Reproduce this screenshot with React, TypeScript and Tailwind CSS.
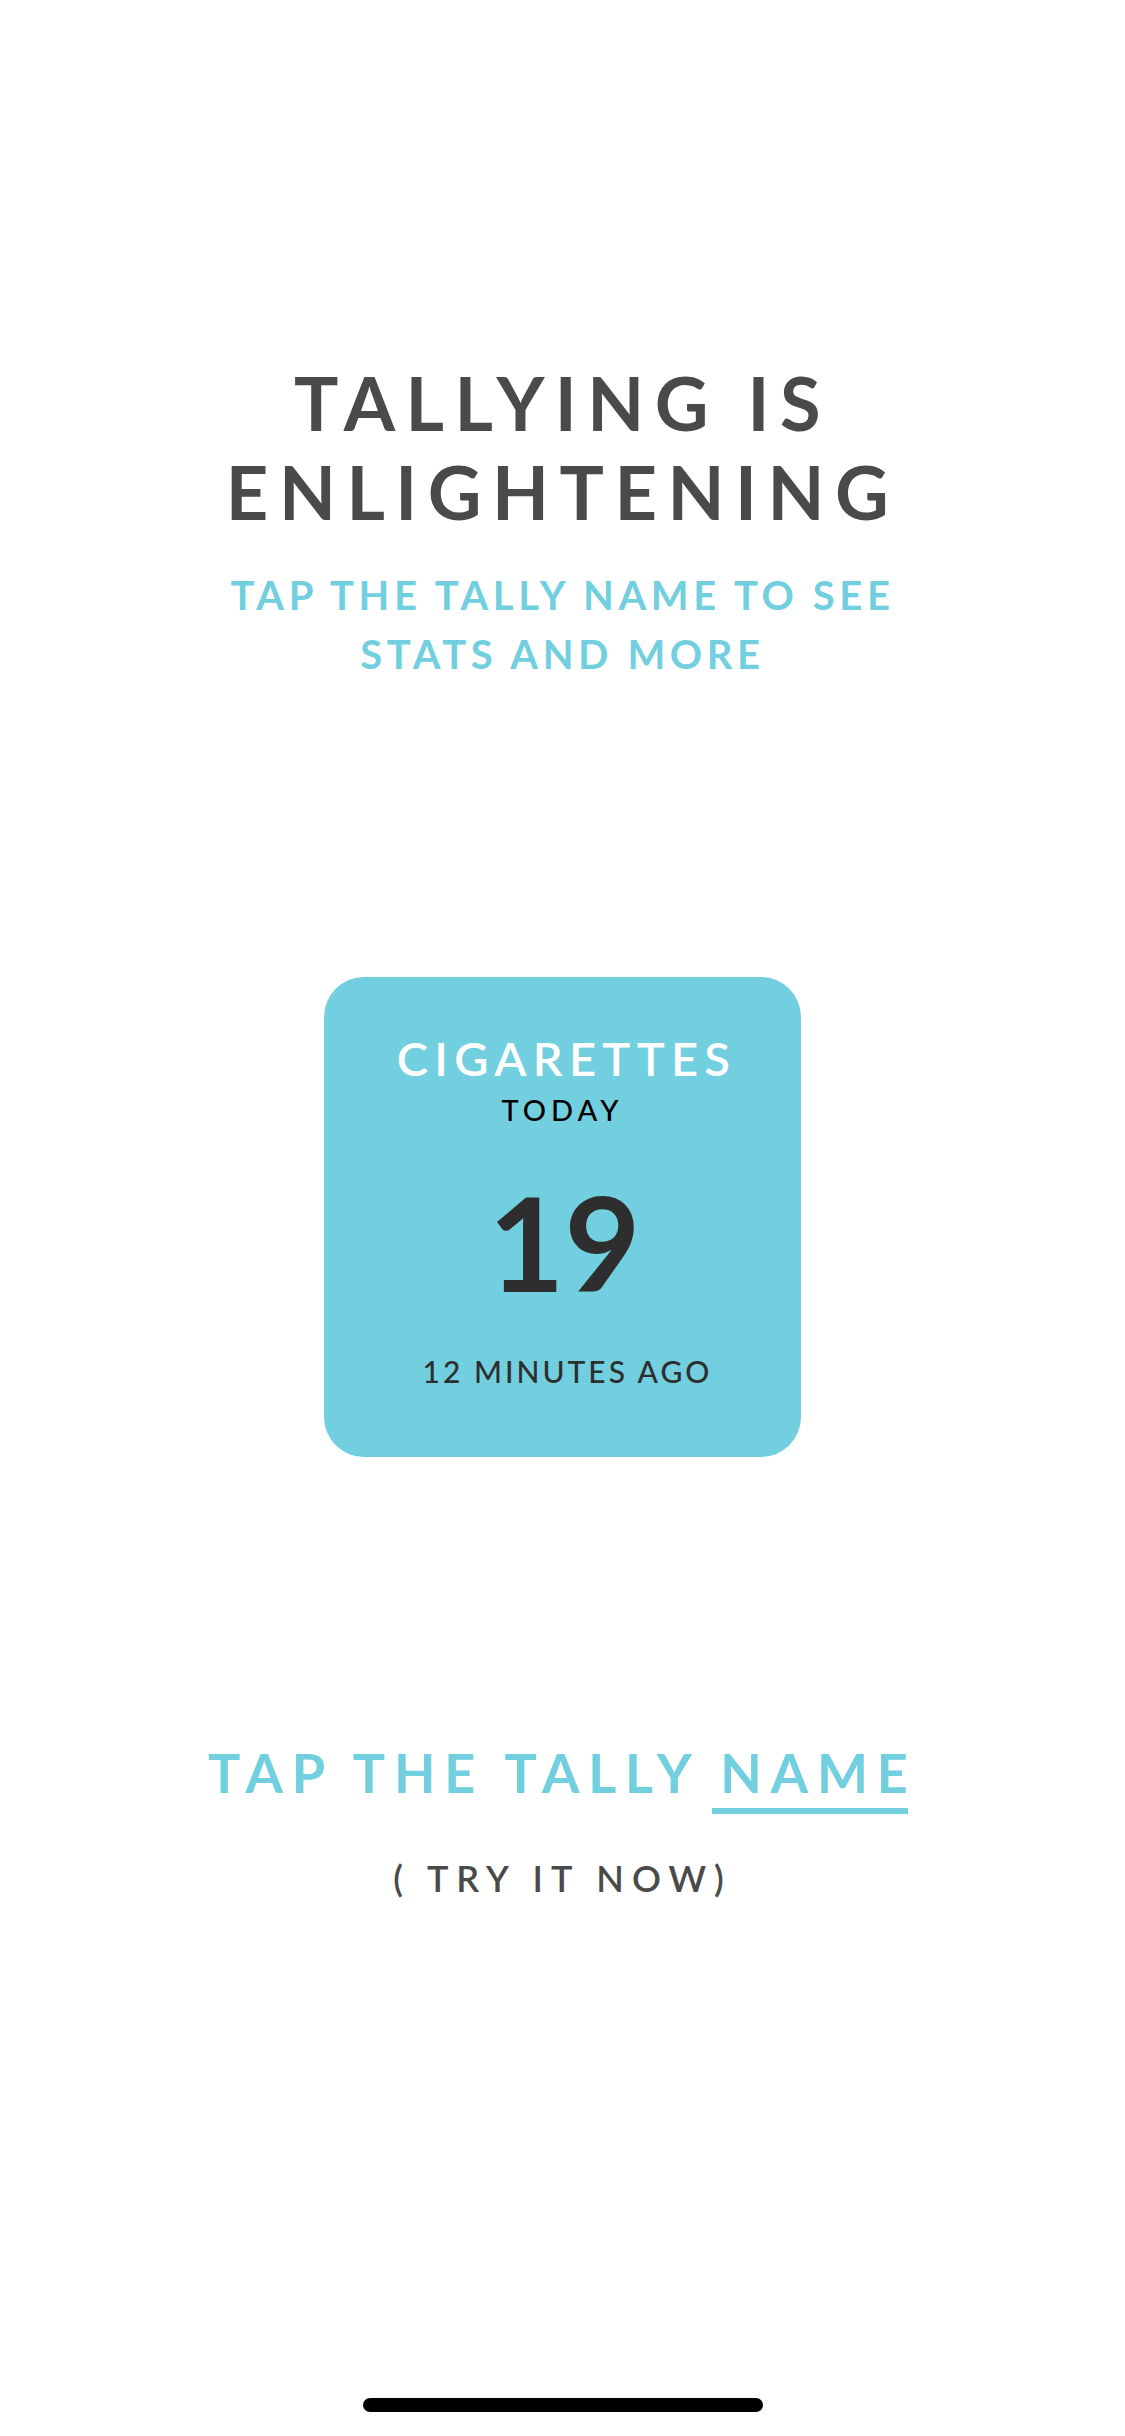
export default function App() {
  return (
    <div className="min-h-[2436px] w-full bg-white flex flex-col items-center font-['Lato','Liberation_Sans',sans-serif]">
      {/* heading */}
      <h1 className="pt-[358px] text-center text-[74px] leading-[89px] font-bold tracking-[10.5px] text-[#4a4a4a]">
        TALLYING IS
        <br />
        ENLIGHTENING
      </h1>
      <p className="mt-[30px] text-center text-[40px] leading-[59px] font-bold tracking-[4.6px] text-[#72cfe0]">
        TAP THE TALLY NAME TO SEE
        <br />
        STATS AND MORE
      </p>

      {/* tally card */}
      <div className="mt-[293px] w-[477px] h-[480px] rounded-[40px] bg-[#72cfdf] flex flex-col items-center pt-[58px]">
        <div className="pl-[8px] text-[47px] leading-[47px] font-semibold tracking-[6.3px] text-white">CIGARETTES</div>
        <div className="mt-[13px] text-[29px] leading-[29px] font-medium tracking-[5px] text-black">TODAY</div>
        <div className="mt-[52px] pl-[4px] text-[131px] leading-[131px] font-bold text-[#2e2e2e]">19</div>
        <div className="mt-[49px] pl-[10px] text-[30px] leading-[30px] font-medium tracking-[3px] text-[#2e2e2e]">12 MINUTES AGO</div>
      </div>

      <div className="mt-[289px] text-center text-[54px] leading-[54px] font-bold tracking-[8.8px] text-[#72cfe0]">
        TAP THE TALLY{" "}
        <span className="-ml-2 pl-2 pb-[3px] border-b-[6px] border-[#72cfe0]">
          NAM<span className="tracking-normal">E</span>
        </span>
        <span className="inline-block w-[9px]"></span>
      </div>
      <div className="mt-[60px] text-center text-[36px] leading-[36px] font-semibold tracking-[8px] text-[#4a4a4a]">
        ( TRY IT NOW)
      </div>

      <div className="mt-auto mb-[24px] w-[400px] h-[14px] rounded-full bg-black" />
    </div>
  );
}
